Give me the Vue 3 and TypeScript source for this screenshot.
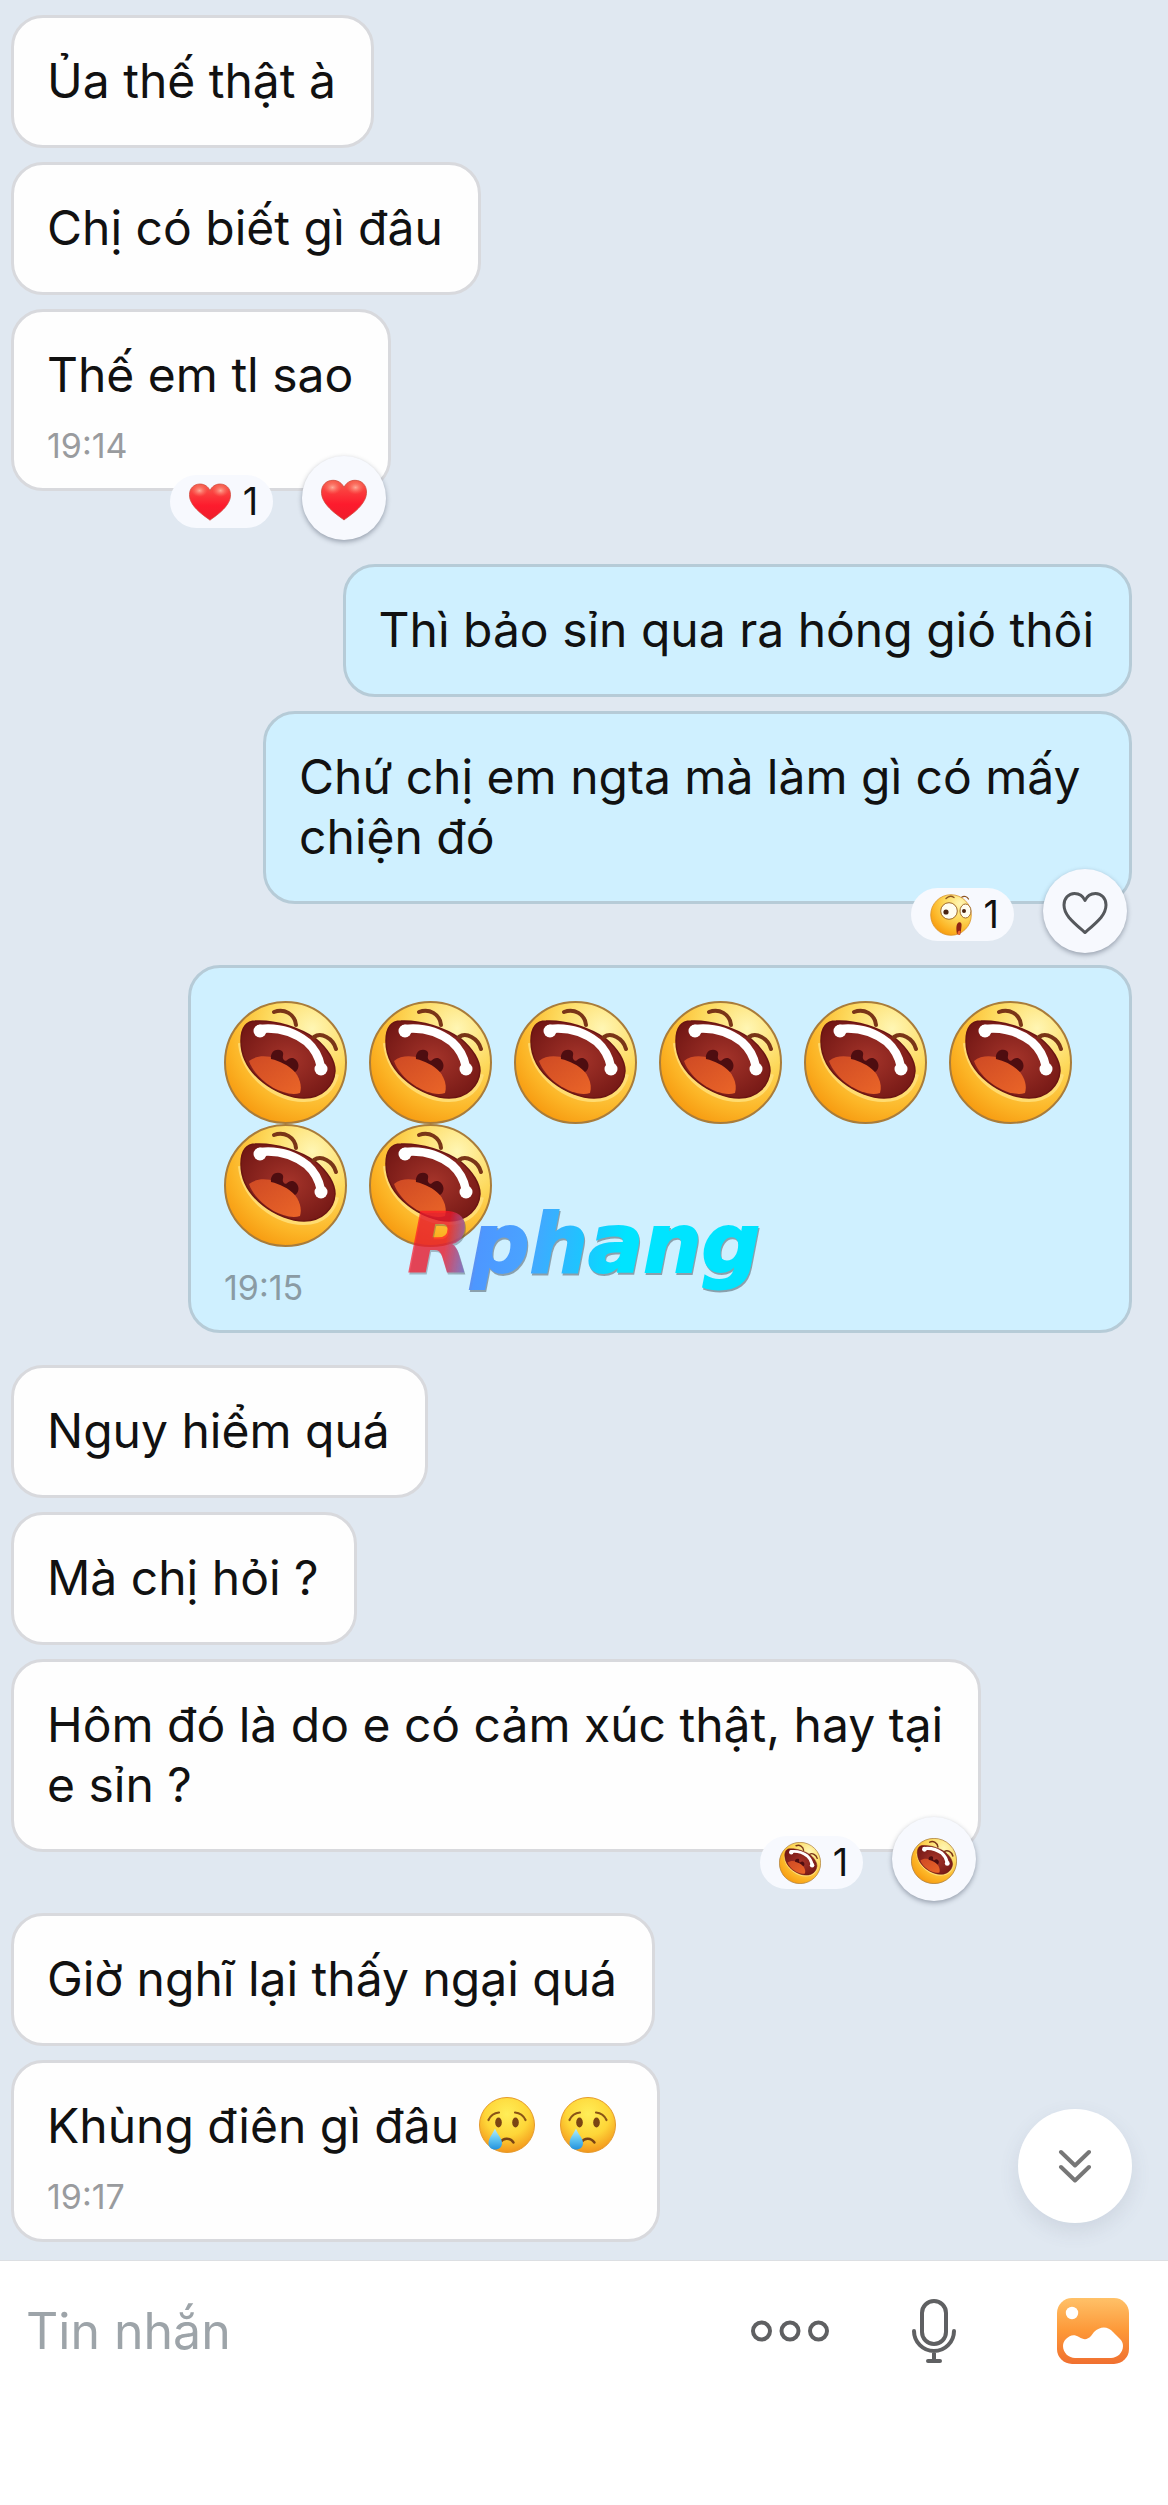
<script setup lang="ts">
import { ref } from 'vue'

type Face = 'heart' | 'laugh' | 'gasp' | 'outline'

interface Message {
  id: number
  mine?: boolean
  text?: string
  tears?: number
  laughs?: number
  time?: string
  reaction?: { face: Face; count: number; own: Face }
}

const groups: Message[][] = [
  [
    { id: 1, text: 'Ủa thế thật à' },
    { id: 2, text: 'Chị có biết gì đâu' },
    { id: 3, text: 'Thế em tl sao', time: '19:14', reaction: { face: 'heart', count: 1, own: 'heart' } },
  ],
  [
    { id: 4, mine: true, text: 'Thì bảo sỉn qua ra hóng gió thôi' },
    {
      id: 5,
      mine: true,
      text: 'Chứ chị em ngta mà làm gì có mấy \nchiện đó',
      reaction: { face: 'gasp', count: 1, own: 'outline' },
    },
    { id: 6, mine: true, laughs: 8, time: '19:15' },
  ],
  [
    { id: 7, text: 'Nguy hiểm quá' },
    { id: 8, text: 'Mà chị hỏi ?' },
    {
      id: 9,
      text: 'Hôm đó là do e có cảm xúc thật, hay tại\ne sỉn ?',
      reaction: { face: 'laugh', count: 1, own: 'laugh' },
    },
    { id: 10, text: 'Giờ nghĩ lại thấy ngại quá' },
    { id: 11, text: 'Khùng điên gì đâu', tears: 2, time: '19:17' },
  ],
]

const draft = ref('')
</script>

<template>
  <div class="page">
    <svg class="sprite" aria-hidden="true">
      <defs>
        <radialGradient id="g-skin" cx="0.72" cy="0.22" r="0.85">
          <stop offset="0" stop-color="#fff6b4" />
          <stop offset="0.45" stop-color="#fdd95c" />
          <stop offset="0.8" stop-color="#fcb526" />
          <stop offset="1" stop-color="#f79c12" />
        </radialGradient>
        <radialGradient id="g-mouth" cx="0.5" cy="0.5" r="0.6">
          <stop offset="0" stop-color="#a5342a" />
          <stop offset="1" stop-color="#741815" />
        </radialGradient>
        <linearGradient id="g-tongue" x1="0" y1="0" x2="1" y2="1">
          <stop offset="0" stop-color="#cf4a24" />
          <stop offset="1" stop-color="#ea6528" />
        </linearGradient>
        <linearGradient id="g-heart" x1="0" y1="0" x2="0" y2="1">
          <stop offset="0" stop-color="#f5614f" />
          <stop offset="0.3" stop-color="#fb3a3c" />
          <stop offset="0.6" stop-color="#fd1b2d" />
          <stop offset="1" stop-color="#ee1d2b" />
        </linearGradient>
        <radialGradient id="g-shine" cx="0.5" cy="0.5" r="0.5">
          <stop offset="0" stop-color="#ffc3ad" stop-opacity="0.8" />
          <stop offset="1" stop-color="#ff7a66" stop-opacity="0" />
        </radialGradient>
        <radialGradient id="g-sad" cx="0.5" cy="0.3" r="0.72">
          <stop offset="0" stop-color="#ffee58" />
          <stop offset="0.55" stop-color="#fed638" />
          <stop offset="1" stop-color="#f2921a" />
        </radialGradient>
        <linearGradient id="g-tear" x1="0" y1="0" x2="0" y2="1">
          <stop offset="0" stop-color="#b8ecfb" />
          <stop offset="0.5" stop-color="#62c6f2" />
          <stop offset="1" stop-color="#2392dd" />
        </linearGradient>
        <linearGradient id="g-photo" x1="0" y1="0" x2="0" y2="1">
          <stop offset="0" stop-color="#ffc168" />
          <stop offset="0.5" stop-color="#fd9838" />
          <stop offset="1" stop-color="#f07030" />
        </linearGradient>
      </defs>

      <symbol id="laugh" viewBox="0 0 123 123">
        <circle cx="61.5" cy="61.5" r="60.5" fill="url(#g-skin)" stroke="#a97c3a" stroke-width="2" />
        <path d="M17 42C20 76 55 99 80 98C99 98 109 86 112 73" fill="none" stroke="#ffe17a" stroke-width="6" opacity="0.85" />
        <path d="M17 40C17 27 22 20 32 20C52 19 76 27 92 38C104 48 111 60 111 70C110 84 99 97 80 97C55 97 17 74 17 40Z" fill="url(#g-mouth)" stroke="#6b1512" stroke-width="1.5" />
        <path d="M25 60C35 52 52 55 64 64C73 71 79 82 76 92C60 97 32 80 25 60Z" fill="url(#g-tongue)" />
        <path d="M47 58C46 50 53 47 58 50C61 53 57 56 60 59C63 62 63 56 69 57C76 60 76 68 71 71C64 64 56 60 47 58Z" fill="#4e0d10" />
        <path d="M36 28C54 26 70 31 83 41C91 48 95 56 97 66" fill="none" stroke="#fff" stroke-width="8.5" stroke-linecap="round" />
        <circle cx="36" cy="30" r="6.5" fill="#fff" />
        <circle cx="97" cy="68" r="6.5" fill="#fff" />
        <path d="M50 11C60 7 71 13 72 24M90 36C97 31 109 37 112 48" fill="none" stroke="#7a3517" stroke-width="4" stroke-linecap="round" />
      </symbol>

      <symbol id="heart" viewBox="0 0 46 41">
        <path d="M23 40.500C20 38 12 33 6.500 26.500C2 21 0.500 17 0.500 12.500C0.500 5.500 5.500 0.800 12 0.800C17 0.800 21 3.500 23 8C25 3.500 29 0.800 34 0.800C40.500 0.800 45.500 5.500 45.500 12.500C45.500 17 44 21 39.500 26.500C34 33 26 38 23 40.500Z" fill="url(#g-heart)" stroke="#cf4a3c" stroke-width="0.800" />
        <ellipse cx="11.500" cy="8" rx="9" ry="7" fill="url(#g-shine)" />
        <ellipse cx="34.500" cy="8" rx="9" ry="7" fill="url(#g-shine)" />
      </symbol>

      <symbol id="outline" viewBox="0 0 46 43">
        <path d="M23 41C19 37.500 12 32 7 26C3.500 21.500 2 18 2 13.500C2 7 6.500 2 12.500 2C17 2 21 4.500 23 9C25 4.500 29 2 33.500 2C39.500 2 44 7 44 13.500C44 18 42.500 21.500 39 26C34 32 27 37.500 23 41Z" fill="none" stroke="#55585c" stroke-width="3" stroke-linejoin="round" />
      </symbol>

      <symbol id="gasp" viewBox="0 0 42 42">
        <circle cx="21" cy="21" r="20.300" fill="url(#g-skin)" stroke="#d8932c" stroke-width="0.800" />
        <circle cx="19" cy="17" r="8.300" fill="#fffdf0" stroke="#a06a2a" stroke-width="1" />
        <ellipse cx="35.500" cy="17" rx="5.500" ry="7" fill="#fffdf0" stroke="#a06a2a" stroke-width="1" />
        <circle cx="16" cy="18" r="2.600" fill="#4b2412" />
        <circle cx="34" cy="17" r="2" fill="#4b2412" />
        <path d="M16 4.500C19 1.500 22 2 24 3.500M32 3C34 1.500 37 2.500 38.500 5" fill="none" stroke="#8c5220" stroke-width="1.300" stroke-linecap="round" />
        <path d="M27 40C26 35 26 30 28.500 28.500C30.500 27.500 32 29 31.500 32C31 36 31 38 30 41Z" fill="#8e2415" />
        <path d="M27.500 40C27.500 37 29 36 30.500 37L30 41Z" fill="#ee6630" />
      </symbol>

      <symbol id="tear" viewBox="0 0 56 56">
        <circle cx="28" cy="28" r="27.500" fill="url(#g-sad)" stroke="#e59a2c" stroke-width="1" />
        <path d="M9.500 23C11.500 18.500 15 16 20 15.500M36 15.500C41 16 44.500 18.500 46.500 23" fill="none" stroke="#8a5416" stroke-width="2.200" stroke-linecap="round" />
        <ellipse cx="19.500" cy="25.500" rx="3.300" ry="5" fill="#7b4413" />
        <ellipse cx="36.500" cy="25.500" rx="3.300" ry="5" fill="#7b4413" />
        <path d="M21.500 45C24.500 40.500 31 40.500 34.500 45.500" fill="none" stroke="#7b4413" stroke-width="2.400" stroke-linecap="round" />
        <path d="M16 31.500C13 38 9.500 41 9.500 46C9.500 50 12 52.500 16 52.500C20.500 52.500 23 50 23 46C23 41 18.500 38 16 31.500Z" fill="url(#g-tear)" />
      </symbol>
    </svg>

    <main class="chat">
      <section v-for="(group, g) in groups" :key="g" class="group">
        <article
          v-for="msg in group"
          :key="msg.id"
          class="bubble"
          :class="{ mine: msg.mine, timed: msg.time, reacted: msg.reaction }"
        >
          <p v-if="msg.text" class="text">{{ msg.text }}<template v-for="n in msg.tears ?? 0" :key="n">{{ ' ' }}<svg class="tear" role="img" aria-label="crying face"><use href="#tear" /></svg></template></p>
          <div v-if="msg.laughs" class="laughs">
            <svg v-for="n in msg.laughs" :key="n" class="laugh" role="img" aria-label="laughing face"><use href="#laugh" /></svg>
          </div>
          <time v-if="msg.time" class="time">{{ msg.time }}</time>
          <div v-if="msg.reaction" class="reactions">
            <button type="button" class="pill">
              <svg class="pill-icon" aria-hidden="true"><use :href="'#' + msg.reaction.face" /></svg>
              <span>{{ msg.reaction.count }}</span>
            </button>
            <button type="button" class="react" aria-label="React">
              <svg class="react-icon" aria-hidden="true"><use :href="'#' + msg.reaction.own" /></svg>
            </button>
          </div>
        </article>
      </section>

      <button type="button" class="jump" aria-label="Scroll to latest">
        <svg width="34" height="34" viewBox="0 0 34 34" fill="none" stroke="#777" stroke-width="4" stroke-linecap="round" stroke-linejoin="round" aria-hidden="true">
          <path d="M3 3L17 16.500L31 3M3 18L17 31.500L31 18" />
        </svg>
      </button>
    </main>

    <form class="composer" @submit.prevent>
      <input v-model="draft" class="field" type="text" placeholder="Tin nhắn" aria-label="Tin nhắn" />
      <button type="button" class="tool" aria-label="More">
        <svg width="78" height="22" viewBox="0 0 78 22" fill="none" stroke="#5f6062" stroke-width="4" aria-hidden="true">
          <circle cx="10.500" cy="11" r="8.500" />
          <circle cx="39" cy="11" r="8.500" />
          <circle cx="67.500" cy="11" r="8.500" />
        </svg>
      </button>
      <button type="button" class="tool" aria-label="Record">
        <svg width="44" height="66" viewBox="0 0 44 66" fill="none" stroke="#5f6062" stroke-width="4" stroke-linecap="round" aria-hidden="true">
          <rect x="10" y="3" width="24" height="43" rx="12" />
          <path d="M2 33C2 44 11 53 22 53C33 53 42 44 42 33M22 53V63M16 63H28" />
        </svg>
      </button>
      <button type="button" class="tool" aria-label="Photo">
        <svg width="72" height="66" viewBox="0 0 72 66" aria-hidden="true">
          <rect width="72" height="66" rx="15" fill="url(#g-photo)" />
          <circle cx="15" cy="15" r="6.200" fill="#fff" />
          <path d="M6 48C6 45 7 43 9 41C13 37 17 36 22 39C27 42 30 42 34 38L37 34C43 28 51 28 56 34L63 41C65 43 66 45 66 48C66 55 60 60 54 60H18C12 60 6 55 6 48Z" fill="#fff" />
        </svg>
      </button>
    </form>

    <div class="watermark">Rphang</div>
  </div>
</template>

<style>
body {
  margin: 0;
  background: #fff;
}
</style>

<style scoped>
.page {
  position: relative;
  display: flex;
  flex-direction: column;
  min-height: 100vh;
  font-family: Inter, "Noto Sans", sans-serif;
  color: #111;
}

.sprite {
  position: absolute;
  width: 0;
  height: 0;
}

button {
  border: 0;
  padding: 0;
  font: inherit;
  color: inherit;
  background: none;
}

.chat {
  position: relative;
  display: flex;
  flex-direction: column;
  gap: 32px;
  padding: 15px 36px 18px 11px;
  background: #e0e8f1;
}

.group {
  display: flex;
  flex-direction: column;
  align-items: flex-start;
  gap: 14px;
}

.bubble {
  position: relative;
  box-sizing: border-box;
  max-width: 88%;
  padding: 33px 35px 34px 33px;
  border: 3px solid #d8d9dd;
  border-radius: 32px;
  background: #fefefe;
}

.mine {
  align-self: flex-end;
  border-color: #b6cbd7;
  background: #cff0ff;
}

.timed {
  padding-bottom: 22px;
}

.reacted {
  margin-bottom: 47px;
}

.reacted:last-child {
  margin-bottom: 41px;
}

.text {
  margin: 0;
  font-size: 48px;
  line-height: 60px;
  white-space: pre;
}

.tear {
  width: 56px;
  height: 56px;
  margin: -6px 6px 0;
  vertical-align: -10px;
}

.laughs {
  display: flex;
  flex-wrap: wrap;
  box-sizing: border-box;
  column-gap: 22px;
  max-width: 870px;
  padding-right: 22px;
}

.laugh {
  width: 123px;
  height: 123px;
}

.time {
  display: block;
  margin-top: 21px;
  font-size: 34px;
  line-height: 40px;
  color: #999b9e;
}

.mine .time {
  color: #8a9ba4;
}

.reactions {
  position: absolute;
  right: 2px;
  bottom: -52px;
  display: flex;
  align-items: flex-end;
  gap: 29px;
}

.pill {
  display: flex;
  align-items: center;
  gap: 12px;
  height: 53px;
  margin-bottom: 12px;
  padding: 0 15px 0 19px;
  border-radius: 27px;
  background: #f7f9fe;
  font-size: 38px;
  line-height: 53px;
}

.pill-icon {
  width: 42px;
  height: 42px;
}

.react {
  display: flex;
  align-items: center;
  justify-content: center;
  box-sizing: border-box;
  width: 84px;
  height: 84px;
  padding-top: 4px;
  border-radius: 50%;
  background: #f7f9fe;
  box-shadow: 0 2px 5px rgba(40, 50, 70, 0.4);
}

.react-icon {
  width: 46px;
  height: 46px;
}

.jump {
  position: absolute;
  right: 36px;
  bottom: 37px;
  display: flex;
  align-items: center;
  justify-content: center;
  width: 114px;
  height: 114px;
  border-radius: 50%;
  background: #fff;
  box-shadow: 0 8px 20px rgba(70, 85, 110, 0.12);
}

.composer {
  display: flex;
  align-items: center;
  height: 140px;
  padding: 0 39px 0 26px;
  border-top: 1px solid #dcdfe3;
  background: #fff;
}

.field {
  flex: 1;
  min-width: 0;
  padding: 0;
  border: 0;
  outline: 0;
  background: none;
  font-family: inherit;
  font-size: 50px;
  line-height: 64px;
  color: #111;
}

.field::placeholder {
  color: #9da4a9;
  opacity: 1;
}

.tool {
  display: flex;
}

.tool + .tool {
  margin-left: 83px;
}

.tool:last-child {
  margin-left: 101px;
}

.watermark {
  position: absolute;
  top: 50%;
  left: 50%;
  transform: translate(-50%, -50%);
  padding: 0 8px 18px;
  font-family: "DejaVu Sans", sans-serif;
  font-size: 82px;
  font-style: italic;
  font-weight: 700;
  line-height: 100px;
  color: transparent;
  background: linear-gradient(100deg, rgba(255, 20, 40, 0.7) 14%, #4d97ff 23%, #4aa2ff 34%, #1cc6ff 50%, #00e4ff 60%);
  -webkit-background-clip: text;
  background-clip: text;
  -webkit-text-stroke: 2px transparent;
  filter: drop-shadow(1px 2px 0 rgba(70, 80, 90, 0.5));
  pointer-events: none;
}
</style>
